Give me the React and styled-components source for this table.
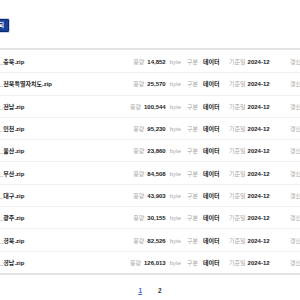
import React from "react";
import styled, { createGlobalStyle } from "styled-components";

const GlobalStyle = createGlobalStyle`
  html, body {
    margin: 0;
    padding: 0;
    background: #ffffff;
    overflow: hidden;
  }
  body {
    font-family: "Liberation Sans", "Noto Sans CJK KR", sans-serif;
    color: #222222;
  }
`;

const Page = styled.div`
  width: 300px;
  height: 300px;
  overflow: hidden;
  display: flex;
  flex-direction: column;
`;

const Toolbar = styled.div`
  display: flex;
  align-items: center;
  height: 48px;
  padding-top: 2px;
  box-sizing: border-box;
`;

const SearchButton = styled.button`
  margin-left: -12px;
  height: 13px;
  padding: 0 4px;
  border: 1px solid #0b2a6e;
  border-radius: 1px;
  background: #173f95;
  color: #ffffff;
  font-family: "Liberation Sans", "Noto Sans CJK KR", sans-serif;
  font-size: 6px;
  font-weight: 700;
  line-height: 11px;
  box-shadow: 0 0 0 1px #c9d3ea;
`;

const List = styled.ul`
  list-style: none;
  margin: 0;
  padding: 0;
  border-top: 2px solid #e4e4e4;
  border-bottom: 2px solid #e4e4e4;
`;

const Row = styled.li`
  display: flex;
  align-items: center;
  height: 22.3px;
  box-sizing: border-box;
  border-top: ${(p) => (p.first ? "none" : "1px solid #f1f1f1")};
  font-size: 6px;
  white-space: nowrap;
`;

const FileName = styled.span`
  flex: 1;
  font-weight: 700;
  color: #222222;
`;

const SizeGroup = styled.span`
  display: flex;
  justify-content: flex-end;
  align-items: baseline;
  width: 60px;
  margin-right: 6px;
`;

const Field = styled.span`
  display: flex;
  align-items: baseline;
  width: ${(p) => p.width}px;
`;

const Label = styled.span`
  color: #a8a8a8;
  margin-right: ${(p) => p.gap || 3}px;
`;

const Value = styled.strong`
  font-weight: 700;
  color: #222222;
`;

const Unit = styled.span`
  color: #a8a8a8;
  margin-left: 4px;
`;

const Tail = styled.span`
  color: #a8a8a8;
  width: 10px;
  overflow: hidden;
`;

const Pager = styled.nav`
  display: flex;
  justify-content: center;
  gap: 14px;
  padding-top: 12px;
  font-size: 6.5px;
  font-weight: 700;
`;

const PageLink = styled.a`
  color: ${(p) => (p.active ? "#3d5fd6" : "#333333")};
  text-decoration: ${(p) => (p.active ? "underline" : "none")};
  padding-left: ${(p) => (p.active ? "0" : "2px")};
`;

const files = [
  { name: "_충북.zip", size: "14,852" },
  { name: "_전북특별자치도.zip", size: "25,570" },
  { name: "_전남.zip", size: "100,544" },
  { name: "_인천.zip", size: "95,230" },
  { name: "_울산.zip", size: "23,860" },
  { name: "_부산.zip", size: "84,508" },
  { name: "_대구.zip", size: "43,903" },
  { name: "_광주.zip", size: "30,155" },
  { name: "_경북.zip", size: "82,526" },
  { name: "_경남.zip", size: "126,013" },
];

const App = () => {
  return (
    <Page>
      <GlobalStyle />
      <Toolbar>
        <SearchButton type="button">조회</SearchButton>
      </Toolbar>
      <List>
        {files.map((f, i) => (
          <Row key={f.name} first={i === 0}>
            <FileName>{f.name}</FileName>
            <SizeGroup>
              <Label>용량</Label>
              <Value>{f.size}</Value>
              <Unit>byte</Unit>
            </SizeGroup>
            <Field width={42}>
              <Label gap={5}>구분</Label>
              <Value>데이터</Value>
            </Field>
            <Field width={61}>
              <Label gap={2}>기준일</Label>
              <Value>2024-12</Value>
            </Field>
            <Tail>갱신</Tail>
          </Row>
        ))}
      </List>
      <Pager>
        <PageLink active href="#">1</PageLink>
        <PageLink href="#">2</PageLink>
      </Pager>
    </Page>
  );
};

export default App;
